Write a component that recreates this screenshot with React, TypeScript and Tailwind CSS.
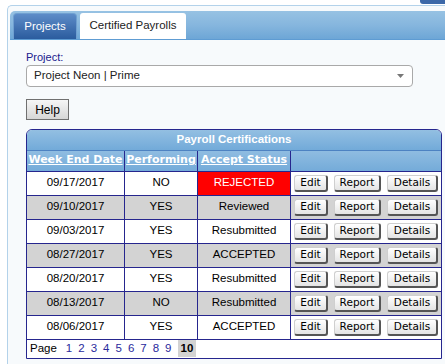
import React from 'react';

const rows = [
  { date: '09/17/2017', perf: 'NO', status: 'REJECTED' },
  { date: '09/10/2017', perf: 'YES', status: 'Reviewed' },
  { date: '09/03/2017', perf: 'YES', status: 'Resubmitted' },
  { date: '08/27/2017', perf: 'YES', status: 'ACCEPTED' },
  { date: '08/20/2017', perf: 'YES', status: 'Resubmitted' },
  { date: '08/13/2017', perf: 'NO', status: 'Resubmitted' },
  { date: '08/06/2017', perf: 'YES', status: 'ACCEPTED' },
];

const RowButton = ({ label, w }: { label: string; w: string }) => (
  <button
    className={`${w} h-[17px] rounded-[3px] border border-[#cfcfcf] border-r-[2px] border-b-[2px] border-r-[#555] border-b-[#555] bg-gradient-to-b from-white to-[#e4e4e4] text-[10.5px] leading-none text-black font-['DejaVu_Sans',sans-serif]`}
  >
    {label}
  </button>
);

export default function App() {
  return (
    <div className="relative w-[445px] h-[364px] overflow-hidden bg-white font-['Liberation_Sans',Arial,sans-serif]">
      <div className="absolute right-0 top-0 w-[25px] h-[4px] rounded-bl-[3px] bg-[#3c68a8]" />
      <div className="ml-[7px] mt-[5px] h-[359px] rounded-tl-[5px] border-l border-t border-[#b3d2ea] bg-[#f7fafc] pl-[2px] pt-[5px]">
        {/* tab bar */}
        <div className="flex h-[29px] items-end gap-[3px] rounded-tl-[5px] border-b border-[#5e9cd3] bg-gradient-to-b from-[#97c2e3] via-[#86b6de] to-[#6da6d6] pl-[3px]">
          <div className="flex h-[26px] w-[64px] items-center justify-center rounded-t-[4px] border border-b-0 border-[#6f9fd0] bg-gradient-to-b from-[#5d8cc8] to-[#2b5c9e] text-[11.5px] text-white">
            Projects
          </div>
          <div className="flex h-[26px] w-[106px] items-center justify-center rounded-t-[3px] bg-white text-[11.5px] text-[#222]">
            Certified Payrolls
          </div>
        </div>

        <div className="pl-[16px] pt-[11px]">
          <div className="text-[11px] leading-[13px] text-[#20208e]">Project:</div>
          <div className="mt-[1px] flex h-[22px] w-[387px] items-center justify-between rounded-[4px] border border-[#a9a9a9] bg-white pl-[7px] pr-[8px] text-[11.5px] text-[#222]">
            <span>Project Neon | Prime</span>
            <svg width="7" height="4" viewBox="0 0 7 4">
              <path d="M0 0 L7 0 L3.5 4 Z" fill="#777" />
            </svg>
          </div>

          <button className="mt-[12px] h-[21px] w-[43px] border border-[#707070] bg-gradient-to-b from-[#f6f6f6] to-[#d6d6d6] text-[12px] text-black">
            Help
          </button>

          {/* table */}
          <div className="mt-[8px] w-[416px] overflow-hidden rounded-t-[6px] border border-[#26268e] bg-white">
            <div className="flex h-[20px] items-center justify-center bg-gradient-to-b from-[#93bfe2] to-[#72aad9] text-[11.5px] font-bold text-white">
              Payroll Certifications
            </div>
            <div className="flex h-[21px] border-t border-[#4d82c2] bg-gradient-to-b from-[#8fbce1] to-[#74abd9] font-['DejaVu_Sans',sans-serif] text-[11px] font-bold text-white">
              <div className="flex w-[97px] items-center justify-center underline">Week End Date</div>
              <div className="flex w-[73px] items-center justify-center border-l border-[#26268e] underline">Performing</div>
              <div className="flex w-[93px] items-center justify-center border-l border-[#26268e] underline">Accept Status</div>
              <div className="flex-1 border-l border-[#26268e]" />
            </div>
            {rows.map((r, i) => (
              <div
                key={r.date}
                className={`flex h-[24px] border-t border-[#26268e] text-[11.5px] text-black ${i % 2 === 1 ? 'bg-[#d3d3d3]' : 'bg-white'}`}
              >
                <div className="flex w-[97px] items-center justify-center">{r.date}</div>
                <div className="flex w-[73px] items-center justify-center border-l border-[#26268e]">{r.perf}</div>
                <div
                  className={`flex w-[93px] items-center justify-center border-l border-[#26268e] ${r.status === 'REJECTED' ? 'bg-[#ff0000] text-white' : ''}`}
                >
                  {r.status}
                </div>
                <div className="flex flex-1 items-center gap-[6px] border-l border-[#26268e] pl-[3px]">
                  <RowButton label="Edit" w="w-[34px]" />
                  <RowButton label="Report" w="w-[47px]" />
                  <RowButton label="Details" w="w-[51px]" />
                </div>
              </div>
            ))}
            <div className="flex h-[19px] items-center gap-[6px] border-t border-[#26268e] pl-[3px] text-[11.5px]">
              <span className="mr-[3px] text-black">Page</span>
              {[1, 2, 3, 4, 5, 6, 7, 8, 9].map((n) => (
                <span key={n} className="text-[#2a2a9c]">{n}</span>
              ))}
              <span className="bg-[#d3d3d3] px-[3px] font-bold text-black">10</span>
            </div>
          </div>
        </div>
      </div>
    </div>
  );
}
